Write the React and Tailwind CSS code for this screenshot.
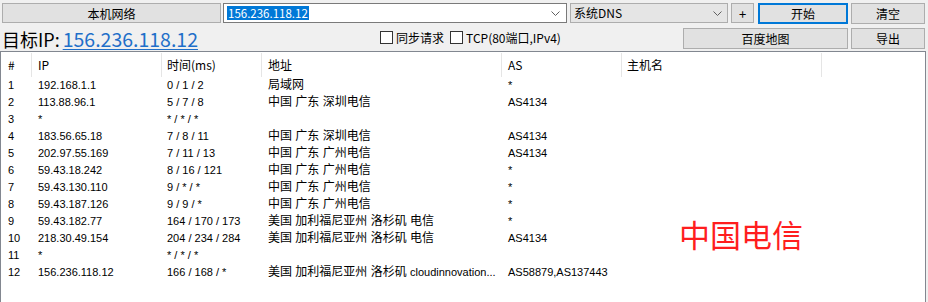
import React from "react";

const rows = [
  ["1", "192.168.1.1", "0 / 1 / 2", "局域网", "*"],
  ["2", "113.88.96.1", "5 / 7 / 8", "中国 广东 深圳电信", "AS4134"],
  ["3", "*", "* / * / *", "", ""],
  ["4", "183.56.65.18", "7 / 8 / 11", "中国 广东 深圳电信", "AS4134"],
  ["5", "202.97.55.169", "7 / 11 / 13", "中国 广东 广州电信", "AS4134"],
  ["6", "59.43.18.242", "8 / 16 / 121", "中国 广东 广州电信", "*"],
  ["7", "59.43.130.110", "9 / * / *", "中国 广东 广州电信", "*"],
  ["8", "59.43.187.126", "9 / 9 / *", "中国 广东 广州电信", "*"],
  ["9", "59.43.182.77", "164 / 170 / 173", "美国 加利福尼亚州 洛杉矶 电信", "*"],
  ["10", "218.30.49.154", "204 / 234 / 284", "美国 加利福尼亚州 洛杉矶 电信", "AS4134"],
  ["11", "*", "* / * / *", "", ""],
  ["12", "156.236.118.12", "166 / 168 / *", "美国 加利福尼亚州 洛杉矶 ", "AS58879,AS137443", "cloudinnovation..."],
];

const cjk = "font-['Noto_Sans_CJK_SC',sans-serif]";
const lat = "font-['Liberation_Sans','Noto_Sans_CJK_SC',sans-serif]";

function Chevron({ className = "" }) {
  return (
    <svg width="9" height="5" viewBox="0 0 9 5" className={className}>
      <path d="M0.5 0.5 L4.5 4.5 L8.5 0.5" fill="none" stroke="#606060" strokeWidth="1" />
    </svg>
  );
}

function Btn({ children, className = "" }) {
  return (
    <div
      className={`flex items-center justify-center bg-[#e1e1e1] border border-[#adadad] text-[12px] text-black leading-none ${cjk} ${className}`}
    >
      {children}
    </div>
  );
}

function Check({ label, className = "" }) {
  return (
    <div className={`flex items-center gap-[3px] ${className}`}>
      <div className="w-[13px] h-[13px] border border-[#333] bg-white" />
      <span className="text-[12px] leading-none text-black">{label}</span>
    </div>
  );
}

export default function App() {
  return (
    <div className={`relative w-[928px] h-[302px] bg-[#f0f0f0] overflow-hidden ${cjk} flex flex-col`}>
      {/* Row 1 */}
      <div className="flex h-[21px] mt-[3px] ml-[2px]">
        <Btn className="w-[219px] h-[20px] pt-[2px]">本机网络</Btn>
        <div className="ml-[2px] w-[344px] h-[20px] bg-white border border-[#7a7a7a] flex items-center pl-[3px] pr-[6px]">
          <span className="bg-[#0078d7] text-white text-[11.5px] leading-[14px] px-[1px]">156.236.118.12</span>
          <Chevron className="ml-auto" />
        </div>
        <div className="ml-[3px] w-[158px] h-[20px] bg-[#e5e5e5] border border-[#adadad] flex items-center pl-[3px] pr-[5px]">
          <span className="text-[12px] leading-none">系统DNS</span>
          <Chevron className="ml-auto" />
        </div>
        <Btn className="ml-[3px] w-[23px] h-[20px] text-[13px]">+</Btn>
        <div className="ml-[4px] w-[90px] h-[21px] bg-[#e1e1e1] border-2 border-[#0078d7] flex items-center justify-center text-[12px] pt-[1px]">
          开始
        </div>
        <Btn className="ml-[3px] w-[74px] h-[21px] pt-[1px]">清空</Btn>
      </div>

      {/* Row 2 */}
      <div className="flex items-center h-[27px] ml-[2px]">
        <div className="w-[376px] flex items-baseline text-[18px] leading-none pt-[2px]">
          <span className="text-black">目标IP:</span>
          <span className="ml-[3px] text-[19.5px] text-[#1f6fc9] underline underline-offset-[2px] decoration-[1px]">156.236.118.12</span>
        </div>
        <Check label="同步请求" className="ml-[2px]" />
        <Check label="TCP(80端口,IPv4)" className="ml-[6px]" />
        <Btn className="ml-auto w-[165px] h-[21px] pt-[1px] mt-[1px]">百度地图</Btn>
        <Btn className="ml-[3px] mr-[3px] w-[74px] h-[21px] pt-[1px] mt-[1px]">导出</Btn>
      </div>

      {/* Table */}
      <div className="w-[926px] flex-1 bg-white border-t border-l border-r border-[#828790]">
        <div className="flex h-[25px] text-[12px] text-black">
          {[
            ["#", "w-[31px] pl-[7px]"],
            ["IP", "w-[130px] pl-[6px]"],
            ["时间(ms)", "w-[100px] pl-[5px]"],
            ["地址", "w-[240px] pl-[6px]"],
            ["AS", "w-[120px] pl-[6px]"],
            ["主机名", "w-[200px] pl-[5px]"],
          ].map(([t, c]) => (
            <div key={t} className={`${c} h-[24px] mt-[1px] flex items-center border-r border-[#e5e5e5]`}>
              {t}
            </div>
          ))}
        </div>
        {rows.map((r) => (
          <div key={r[0]} className="flex h-[17px] items-center text-black">
            <div className={`w-[31px] pl-[7px] text-[11px] ${lat}`}>{r[0]}</div>
            <div className={`w-[130px] pl-[6px] text-[11px] ${lat}`}>{r[1]}</div>
            <div className={`w-[100px] pl-[5px] text-[11px] ${lat}`}>{r[2]}</div>
            <div className={`w-[240px] pl-[6px] text-[12px] leading-[17px] -mt-[1px] whitespace-nowrap overflow-hidden ${lat}`}>
              {r[3]}
              {r[5] && <span className="text-[11px]">{r[5]}</span>}
            </div>
            <div className={`w-[120px] pl-[6px] text-[11px] whitespace-nowrap ${lat}`}>{r[4]}</div>
          </div>
        ))}
      </div>

      <div className="absolute left-[679px] top-[218px] text-[31px] leading-none text-[#ff1e1e]">中国电信</div>
    </div>
  );
}
